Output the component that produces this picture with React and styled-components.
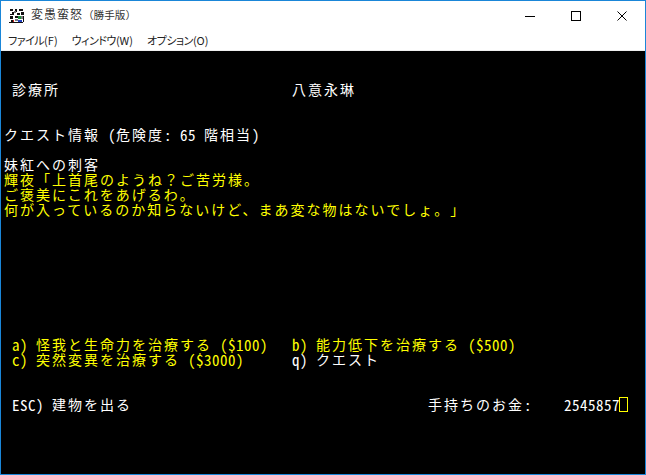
import React from "react";
import styled, { createGlobalStyle } from "styled-components";

const Global = createGlobalStyle`
  html, body { margin: 0; padding: 0; background: #fff; }
  #root { width: 646px; height: 475px; }
`;

const Win = styled.div`
  box-sizing: border-box;
  width: 646px;
  height: 475px;
  border: 1px solid #1a86d8;
  display: flex;
  flex-direction: column;
  background: #fff;
  overflow: hidden;
  text-spacing-trim: space-all;
`;
const TitleBar = styled.div`
  display: flex;
  align-items: center;
  height: 29px;
  padding-left: 8px;
  flex: none;
`;
const AppIcon = styled.svg`
  width: 16px;
  height: 16px;
  flex: none;
  margin-right: 6px;
`;
const TitleText = styled.div`
  flex: 1;
  font: 12px/14px "Noto Sans CJK JP", sans-serif;
  color: #333;
  margin-top: -2px;
  white-space: nowrap;
`;
const TitleName = styled.span`
  letter-spacing: 1px;
`;
const TitleTag = styled.span`
  font-size: 10.6px;
`;
const Caption = styled.button`
  width: 46px;
  height: 29px;
  border: 0;
  padding: 0;
  background: transparent;
  display: flex;
  align-items: center;
  justify-content: center;
`;
const MenuBar = styled.div`
  display: flex;
  height: 20px;
  flex: none;
  border-bottom: 1px solid #f0f0f0;
`;
const MenuItem = styled.div`
  padding: 0 7px 0 7px;
  font: 11px/20px "Noto Sans CJK JP", sans-serif;
  font-feature-settings: "palt";
  letter-spacing: -0.5px;
  color: #222;
  white-space: nowrap;
`;
const MenuKey = styled.span`
  letter-spacing: 0;
`;
const Term = styled.div`
  flex: 1;
  background: #000;
  padding: 1px 0 0 3px;
  display: flex;
  flex-direction: column;
`;
const Row = styled.div`
  display: grid;
  grid-template-columns: repeat(80, 8px);
  height: 15px;
  flex: none;
`;
const Seg = styled.div`
  grid-column: ${p => p.$col + 1} / span ${p => p.$span};
  white-space: pre;
  color: ${p => (p.$y ? "#ffff00" : "#ffffff")};
  font: 15px/15px "Noto Sans CJK JP", monospace;
  letter-spacing: 0.5px;
  font-feature-settings: "hwid";
  display: flex;
`;
const Wide = styled.span`
  font: 14px/15px "Noto Sans CJK JP", sans-serif;
  letter-spacing: 2px;
  font-feature-settings: normal;
`;
const Cursor = styled.div`
  grid-column: ${p => p.$col + 1};
  box-sizing: border-box;
  border: 1px solid #ffff00;
  margin-left: -1px;
  width: 9px;
  height: 15px;
`;

// Split a string into full-width runs and single-byte runs so each lands on the 8px cell grid.
const isWide = ch => ch.charCodeAt(0) > 0x2000;
function Cells({ text }) {
  const runs = [];
  for (const ch of text) {
    const w = isWide(ch);
    if (runs.length && runs[runs.length - 1].w === w) runs[runs.length - 1].t += ch;
    else runs.push({ w, t: ch });
  }
  return runs.map((r, i) => (r.w ? <Wide key={i}>{r.t}</Wide> : <span key={i}>{r.t}</span>));
}

const width = t => [...t].reduce((n, c) => n + (isWide(c) ? 2 : 1), 0);

const screen = [
  [],
  [],
  [{ c: 1, t: "診療所" }, { c: 36, t: "八意永琳" }],
  [],
  [],
  [{ c: 0, t: "クエスト情報 (危険度: 65 階相当)" }],
  [],
  [{ c: 0, t: "妹紅への刺客" }],
  [{ c: 0, t: "輝夜「上首尾のようね\uFF1Fご苦労様。", y: 1 }],
  [{ c: 0, t: "ご褒美にこれをあげるわ。", y: 1 }],
  [{ c: 0, t: "何が入っているのか知らないけど、まあ変な物はないでしょ。」", y: 1 }],
  [], [], [], [], [], [], [], [],
  [{ c: 1, t: "a) 怪我と生命力を治療する ($100)", y: 1 }, { c: 36, t: "b) 能力低下を治療する ($500)", y: 1 }],
  [{ c: 1, t: "c) 突然変異を治療する ($3000)", y: 1 }, { c: 36, t: "q) クエスト" }],
  [], [],
  [{ c: 1, t: "ESC) 建物を出る" }, { c: 53, t: "手持ちのお金:" }, { c: 70, t: "2545857" }],
];

export default function App() {
  return (
    <Win>
      <Global />
      <TitleBar>
        <AppIcon viewBox="0 0 16 16" shapeRendering="crispEdges">
          <rect width="16" height="16" fill="#fff" />
          <path d="M1 1h3v2H1zM6 1h2v3H6zM10 1h4v2h-4zM3 4h2v3H3zM8 5h3v2H8zM12 4h3v3h-3zM1 8h3v3H1zM6 8h3v2H6zM2 12h2v3H2zM1 6h2v1H1zM14 8h1v6h-1zM0 14h14v1H0z" fill="#111" />
          <path d="M5 3h2v2H5zM12 8h2v3h-2zM6 11h3v2H6z" fill="#7a7a7a" />
          <path d="M9 8h3v3H9z" fill="#1a8f3a" />
          <path d="M9 12h4v2H9z" fill="#1f3fc4" />
          <path d="M4 12h1v2H4z" fill="#c42020" />
        </AppIcon>
        <TitleText>
          <TitleName>変愚蛮怒</TitleName>
          <TitleTag>{"\uFF08勝手版\uFF09"}</TitleTag>
        </TitleText>
        <Caption aria-label="minimize">
          <svg width="10" height="10" viewBox="0 0 10 10" shapeRendering="crispEdges"><path d="M0 5h10" stroke="#000" /></svg>
        </Caption>
        <Caption aria-label="maximize">
          <svg width="10" height="10" viewBox="0 0 10 10" shapeRendering="crispEdges"><rect x=".5" y=".5" width="9" height="9" fill="none" stroke="#000" /></svg>
        </Caption>
        <Caption aria-label="close">
          <svg width="10" height="10" viewBox="0 0 10 10"><path d="M.5.5l9 9M9.5.5l-9 9" stroke="#000" fill="none" /></svg>
        </Caption>
      </TitleBar>
      <MenuBar>
        <MenuItem>ファイル<MenuKey>(F)</MenuKey></MenuItem>
        <MenuItem>ウィンドウ<MenuKey>(W)</MenuKey></MenuItem>
        <MenuItem>オプション<MenuKey>(O)</MenuKey></MenuItem>
      </MenuBar>
      <Term>
        {screen.map((segs, i) => (
          <Row key={i}>
            {segs.map((s, j) => (
              <Seg key={j} $col={s.c} $span={width(s.t)} $y={s.y}>
                <Cells text={s.t} />
              </Seg>
            ))}
            {i === 23 && <Cursor $col={77} />}
          </Row>
        ))}
      </Term>
    </Win>
  );
}
